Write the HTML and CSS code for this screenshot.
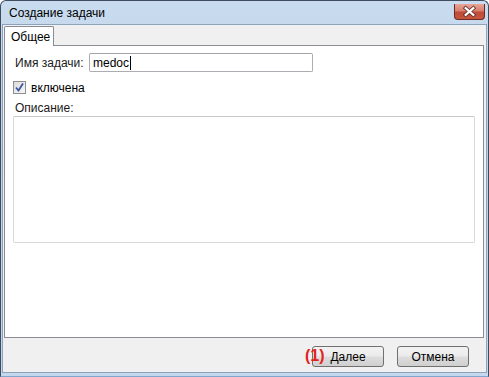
FILE: index.html
```html
<!DOCTYPE html>
<html lang="ru">
<head>
    <meta charset="UTF-8">
    <title>Создание задачи</title>
    <link rel="stylesheet" href="styles.css">
</head>
<body>
    <div class="window">
        <div class="titlebar">
            <span class="title">Создание задачи</span>
            <span class="close-button">
                <svg width="30" height="15" viewBox="0 0 30 15">
                    <path d="M11 4 L19 11 M19 4 L11 11" stroke="#5a2a22" stroke-width="4" stroke-linecap="square"/>
                    <path d="M11 4 L19 11 M19 4 L11 11" stroke="#ffffff" stroke-width="2.2" stroke-linecap="square"/>
                </svg>
            </span>
        </div>

        <div class="client">
            <div class="tabs">
                <div class="tab active">Общее</div>
            </div>

            <div class="tab-panel">
                <div class="field-row">
                    <span class="label">Имя задачи:</span>
                    <div class="text-input">medoc<span class="caret"></span></div>
                </div>

                <label class="check-row">
                    <span class="check-box">
                        <svg width="11" height="11" viewBox="0 0 11 11">
                            <path d="M2 5.5 L4.5 8.5 L9 1.5" fill="none" stroke="#3d56a0" stroke-width="1.8"/>
                        </svg>
                    </span>
                    <span>включена</span>
                </label>

                <div class="label description-label">Описание:</div>
                <div class="text-area"></div>
            </div>

            <div class="footer">
                <div class="button-wrap">
                    <span class="step-badge">(1)</span>
                    <a href="#" class="button">Далее</a>
                </div>
                <a href="#" class="button">Отмена</a>
            </div>
        </div>
    </div>
</body>
</html>
```

FILE: styles.css
```css
* {
    margin: 0;
    padding: 0;
    box-sizing: border-box;
}

body {
    font-family: 'Liberation Sans', Arial, sans-serif;
    font-size: 12px;
    color: #000;
    background: #ffffff;
    width: 489px;
    height: 377px;
    overflow: hidden;
}

.window {
    width: 489px;
    height: 377px;
    border: 1px solid #3e4c5e;
    border-radius: 6px 6px 0 0;
    background: linear-gradient(180deg, #c9dbee 0%, #bcd2ea 40%, #c4d8ee 100%);
    padding: 0 1px 3px 1px;
    display: flex;
    flex-direction: column;
    border-bottom-color: #7fa6cc;
}

.titlebar {
    height: 23px;
    display: flex;
    justify-content: space-between;
    align-items: flex-start;
    padding-left: 7px;
}

.title {
    margin-top: 5px;
    font-size: 12px;
    color: #000;
}

.close-button {
    margin-top: 3px;
    margin-right: 2px;
    width: 31px;
    height: 16px;
    border: 1px solid #6b2a22;
    border-top: none;
    border-radius: 0 0 4px 4px;
    background: linear-gradient(180deg, #e8a598 0%, #d8806f 45%, #c04a38 55%, #c8553f 100%);
    display: flex;
    align-items: center;
    justify-content: center;
}

.client {
    flex: 1;
    background: #f0f0f0;
    border: 1px solid #8da3bd;
    display: flex;
    flex-direction: column;
    padding: 0 2px 0 1px;
}

.tabs {
    display: flex;
    height: 21px;
    padding-top: 1px;
    margin-bottom: -1px;
    position: relative;
    z-index: 1;
}

.tab {
    width: 50px;
    height: 20px;
    border: 1px solid #898c95;
    border-bottom: none;
    border-radius: 2px 2px 0 0;
    background: #ffffff;
    padding: 3px 0 0 6px;
}

.tab-panel {
    height: 293px;
    background: #ffffff;
    border: 1px solid #898c95;
    padding: 7px 8px 0 8px;
}

.field-row {
    display: flex;
    align-items: center;
    height: 19px;
}

.label {
    color: #1a1a1a;
    padding-left: 2px;
}

.field-row .label {
    width: 76px;
}

.text-input {
    width: 224px;
    height: 19px;
    border: 1px solid #abadb3;
    border-top-color: #a0a3aa;
    border-radius: 2px;
    padding: 1px 0 0 3px;
    display: flex;
    align-items: center;
}

.caret {
    display: inline-block;
    width: 1px;
    height: 14px;
    background: #000;
    margin-left: 1px;
}

.check-row {
    display: flex;
    align-items: center;
    gap: 5px;
    margin-top: 9px;
    height: 13px;
}

.check-box {
    width: 13px;
    height: 13px;
    border: 1px solid #8e8f8f;
    background: linear-gradient(135deg, #dcdcdc 0%, #f6f6f6 100%);
    display: flex;
    align-items: center;
    justify-content: center;
}

.description-label {
    margin-top: 7px;
    height: 15px;
}

.text-area {
    width: 462px;
    height: 127px;
    border: 1px solid #d9d9d9;
    border-top-color: #c8c8c8;
    border-radius: 2px;
    background: #ffffff;
}

.footer {
    flex: 1;
    display: flex;
    justify-content: flex-end;
    align-items: flex-start;
    gap: 13px;
    padding: 8px 15px 0 0;
}

.button-wrap {
    position: relative;
}

.step-badge {
    position: absolute;
    left: -7px;
    top: 0;
    font-size: 16px;
    font-weight: bold;
    color: #e3221c;
    line-height: 20px;
}

.button {
    display: flex;
    align-items: center;
    justify-content: center;
    width: 72px;
    height: 21px;
    border: 1px solid #707070;
    border-radius: 3px;
    background: linear-gradient(180deg, #f2f2f2 0%, #ebebeb 48%, #dddddd 52%, #cfcfcf 100%);
    color: #000;
    text-decoration: none;
    font-size: 12px;
}
```
